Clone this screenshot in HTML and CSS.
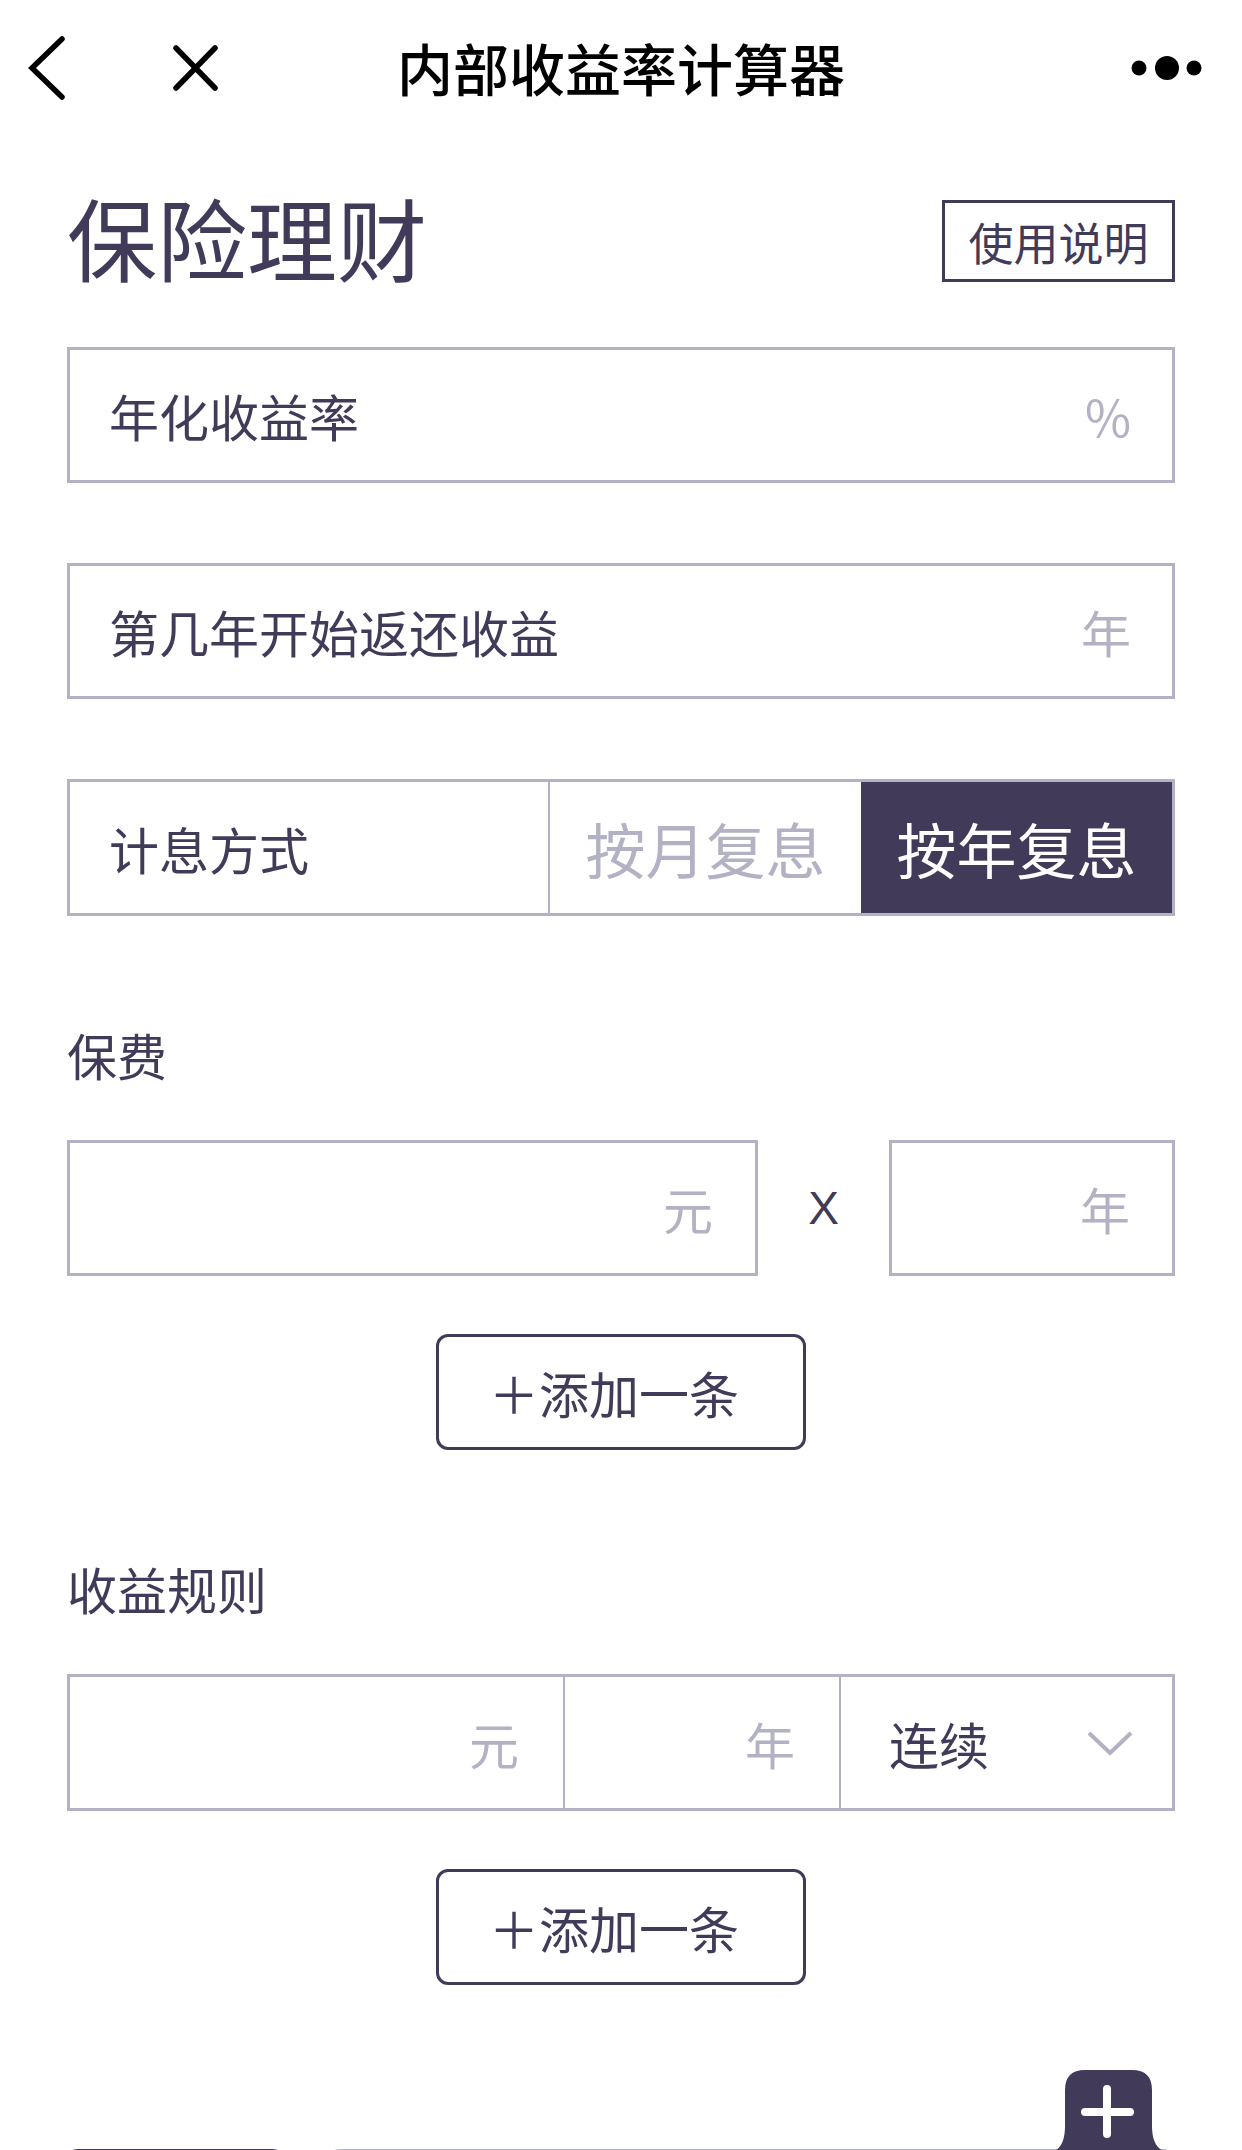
FILE: index.html
```html
<!DOCTYPE html>
<html lang="zh-CN">
  <head>
    <meta charset="UTF-8" />
    <meta name="viewport" content="width=device-width, initial-scale=1.0" />
    <title>内部收益率计算器</title>
    <link rel="stylesheet" href="styles.css">
  </head>
  <body>
    <div class="app">
      <header class="nav">
        <div class="nav-left">
          <svg width="240" height="134" viewBox="0 0 240 134">
            <path d="M62 39 L32 68 L62 97" />
            <path d="M176 48 L215 88 M215 48 L176 88" />
          </svg>
        </div>
        <h1 class="nav-title">内部收益率计算器</h1>
        <div class="nav-right">
          <svg width="120" height="134" viewBox="1122 0 120 134">
            <circle cx="1139" cy="68" r="7.5" />
            <circle cx="1167" cy="68" r="12" />
            <circle cx="1194" cy="68" r="7.5" />
          </svg>
        </div>
      </header>

      <main class="content">
        <div class="page-head">
          <h2 class="page-title">保险理财</h2>
          <button type="button" class="help-btn">使用说明</button>
        </div>

        <div class="field">
          <span class="field-label">年化收益率</span>
          <span class="unit">%</span>
        </div>
        <div class="field">
          <span class="field-label">第几年开始返还收益</span>
          <span class="unit">年</span>
        </div>
        <div class="field toggle">
          <span class="field-label">计息方式</span>
          <span class="seg">按月复息</span>
          <span class="seg active">按年复息</span>
        </div>

        <h3 class="section-label">保费</h3>
        <div class="premium-row">
          <div class="box"><span class="unit">元</span></div>
          <span class="times">X</span>
          <div class="box"><span class="unit">年</span></div>
        </div>
        <button type="button" class="add-btn">＋添加一条</button>

        <h3 class="section-label">收益规则</h3>
        <div class="rule-row">
          <div class="cell"><span class="unit">元</span></div>
          <div class="cell"><span class="unit">年</span></div>
          <div class="cell select">
            <span>连续</span>
            <svg width="48" height="26" viewBox="0 0 48 26">
              <path d="M3 3 L24 23 L45 3" />
            </svg>
          </div>
        </div>
        <button type="button" class="add-btn">＋添加一条</button>
      </main>

      <footer class="bottom-bar">
        <div class="bar-btn"></div>
        <div class="bar-input"></div>
        <svg class="fab" width="118" height="82" viewBox="0 0 118 82">
          <path class="fab-body" d="M2 82 Q15 78 15 56 L15 20 Q15 0 35 0 L82 0 Q102 0 102 20 L102 56 Q102 78 116 82 Z" />
          <path class="fab-plus" d="M35 42 L80 42 M57 19 L57 64" />
        </svg>
      </footer>
    </div>
  </body>
</html>
```

FILE: styles.css
```css
body {
  margin: 0;
  font-family: "Noto Sans CJK SC", "Noto Sans", sans-serif;
  color: #413a58;
  background-color: #ffffff;
}

.app {
  position: relative;
  height: 100vh;
  overflow: hidden;
}

/* top navigation */
.nav {
  height: 134px;
  display: grid;
  grid-template-columns: 1fr auto 1fr;
  align-items: center;
}

.nav-left svg {
  display: block;
  fill: none;
  stroke: #000000;
  stroke-width: 5.5;
  stroke-linecap: round;
}

.nav-right {
  justify-self: end;
}

.nav-right svg {
  display: block;
  fill: #000000;
}

.nav-title {
  margin: 0;
  font-size: 56px;
  line-height: 1;
  font-weight: 500;
  color: #000000;
}

/* content */
.content {
  padding: 0 67px;
}

.page-head {
  display: flex;
  justify-content: space-between;
  align-items: center;
  height: 96px;
  margin-top: 54px;
  margin-bottom: 63px;
}

.page-title {
  margin: 0;
  font-size: 90px;
  line-height: 96px;
  font-weight: 400;
}

.help-btn {
  width: 233px;
  height: 82px;
  margin-top: 10px;
  padding: 0;
  border: 3px solid #413a58;
  background-color: #ffffff;
  font-family: inherit;
  font-size: 45px;
  color: #413a58;
}

.field {
  box-sizing: border-box;
  height: 136px;
  display: flex;
  align-items: center;
  justify-content: space-between;
  padding: 0 41px 0 39px;
  margin-bottom: 80px;
  border: 3px solid #b3b2c4;
  font-size: 50px;
}

.unit {
  color: #b3b2c4;
}

.toggle {
  display: grid;
  grid-template-columns: 1fr 311px 311px;
  align-items: stretch;
  padding: 0;
  margin-bottom: 0;
  height: 137px;
}

.toggle .field-label {
  display: flex;
  align-items: center;
  padding-left: 39px;
  border-right: 2px solid #b3b2c4;
}

.seg {
  display: flex;
  align-items: center;
  justify-content: center;
  font-size: 60px;
  color: #b3b2c4;
}

.seg.active {
  background-color: #413a58;
  color: #ffffff;
}

.section-label {
  margin: 108px 0 56px;
  font-size: 50px;
  line-height: 60px;
  font-weight: 400;
}

.premium-row {
  display: grid;
  grid-template-columns: 1fr 131px 286px;
  height: 136px;
}

.box {
  box-sizing: border-box;
  display: flex;
  align-items: center;
  justify-content: flex-end;
  padding-right: 42px;
  border: 3px solid #b3b2c4;
  font-size: 50px;
}

.times {
  align-self: center;
  text-align: center;
  font-family: "Liberation Sans", sans-serif;
  font-size: 46px;
}

.add-btn {
  display: block;
  width: 370px;
  height: 116px;
  margin: 58px auto 0;
  padding: 0 14px 0 0;
  border: 3px solid #413a58;
  border-radius: 12px;
  background-color: #ffffff;
  font-family: inherit;
  font-size: 50px;
  color: #413a58;
}

.rule-row {
  box-sizing: border-box;
  display: grid;
  grid-template-columns: 495px 276px 1fr;
  height: 137px;
  border: 3px solid #b3b2c4;
}

.cell {
  display: flex;
  align-items: center;
  justify-content: flex-end;
  padding-right: 44px;
  border-right: 2px solid #b3b2c4;
  font-size: 50px;
}

.cell.select {
  justify-content: space-between;
  padding: 0 38px 0 48px;
  border-right: none;
}

.cell.select svg {
  fill: none;
  stroke: #b3b2c4;
  stroke-width: 4;
}

/* bottom bar, mostly below the fold */
.bottom-bar {
  position: relative;
  display: flex;
  gap: 40px;
  margin-top: 164px;
  padding: 0 65px 0 64px;
}

.bar-btn {
  width: 222px;
  height: 110px;
  border-radius: 14px;
  background-color: #413a58;
}

.bar-input {
  flex: 1;
  box-sizing: border-box;
  height: 110px;
  border: 3px solid #b3b2c4;
  border-radius: 14px;
}

.fab {
  position: absolute;
  left: 1050px;
  top: -79px;
}

.fab-body {
  fill: #413a58;
}

.fab-plus {
  fill: none;
  stroke: #ffffff;
  stroke-width: 8;
  stroke-linecap: round;
}
```
